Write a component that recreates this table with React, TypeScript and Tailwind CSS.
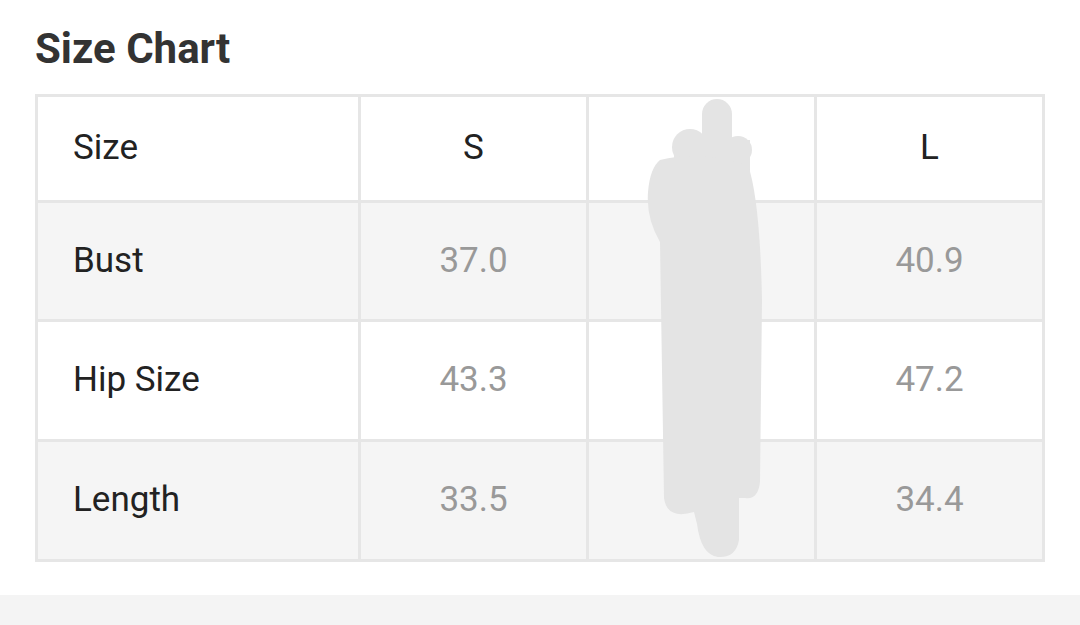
import React from 'react';

const rows = [
    { label: 'Bust', s: '37.0', m: '38.9', l: '40.9', h: 'h-[116px]', bg: 'bg-[#f5f5f5]' },
    { label: 'Hip Size', s: '43.3', m: '45.3', l: '47.2', h: 'h-[117px]', bg: 'bg-white' },
    { label: 'Length', s: '33.5', m: '33.9', l: '34.4', h: 'h-[117px]', bg: 'bg-[#f5f5f5]' },
];

const Scribble = () => (
    <svg
        className="absolute left-0 top-0 pointer-events-none"
        width="1080"
        height="625"
        viewBox="0 0 1080 625"
    >
        <g fill="#e4e4e4">
            <circle cx="717" cy="114" r="15" />
            <circle cx="690" cy="147" r="18" />
            <circle cx="738" cy="150" r="14" />
            <rect x="702" y="114" width="30" height="60" />
            <rect x="674" y="140" width="76" height="40" />
            <path d="M 660 160 Q 700 150 748 165 Q 760 200 762 300 L 760 482 Q 758 500 745 498 L 739 498 L 739 540 Q 736 558 718 557 Q 701 555 697 524 L 694 512 Q 667 520 664 498 L 660 242 Q 646 218 648 192 Q 650 168 660 160 Z" />
        </g>
    </svg>
);

export default function App() {
    return (
        <div className="relative w-[1080px] h-[625px] bg-white overflow-hidden" style={{ fontFamily: 'Roboto, "Liberation Sans", sans-serif' }}>
            {/* title */}
            <div className="pt-[28px] pl-[35px]">
                <h2 className="text-[42px] leading-[42px] font-bold text-[#333]">Size Chart</h2>
            </div>

            {/* table */}
            <div className="mt-[24px] ml-[35px] w-[1010px] grid grid-cols-[320px_225px_225px_225px] gap-[3px] p-[3px] bg-[#e6e6e6] text-[35px]">
                <div className="h-[103px] bg-white flex items-center pl-[35px] text-[#222]">Size</div>
                <div className="h-[103px] bg-white flex items-center justify-center text-[#222]">S</div>
                <div className="h-[103px] bg-white flex items-center justify-center text-[#222]">M</div>
                <div className="h-[103px] bg-white flex items-center justify-center text-[#222]">L</div>

                {rows.map((r) => (
                    <React.Fragment key={r.label}>
                        <div className={`${r.h} ${r.bg} flex items-center pl-[35px] text-[#222]`}>{r.label}</div>
                        <div className={`${r.h} ${r.bg} flex items-center justify-center text-[#999]`}>{r.s}</div>
                        <div className={`${r.h} ${r.bg} flex items-center justify-center text-[#999]`}>{r.m}</div>
                        <div className={`${r.h} ${r.bg} flex items-center justify-center text-[#999]`}>{r.l}</div>
                    </React.Fragment>
                ))}
            </div>

            {/* bottom band */}
            <div className="mt-[33px] h-[40px] bg-[#f4f4f4]" />

            <Scribble />
        </div>
    );
}
